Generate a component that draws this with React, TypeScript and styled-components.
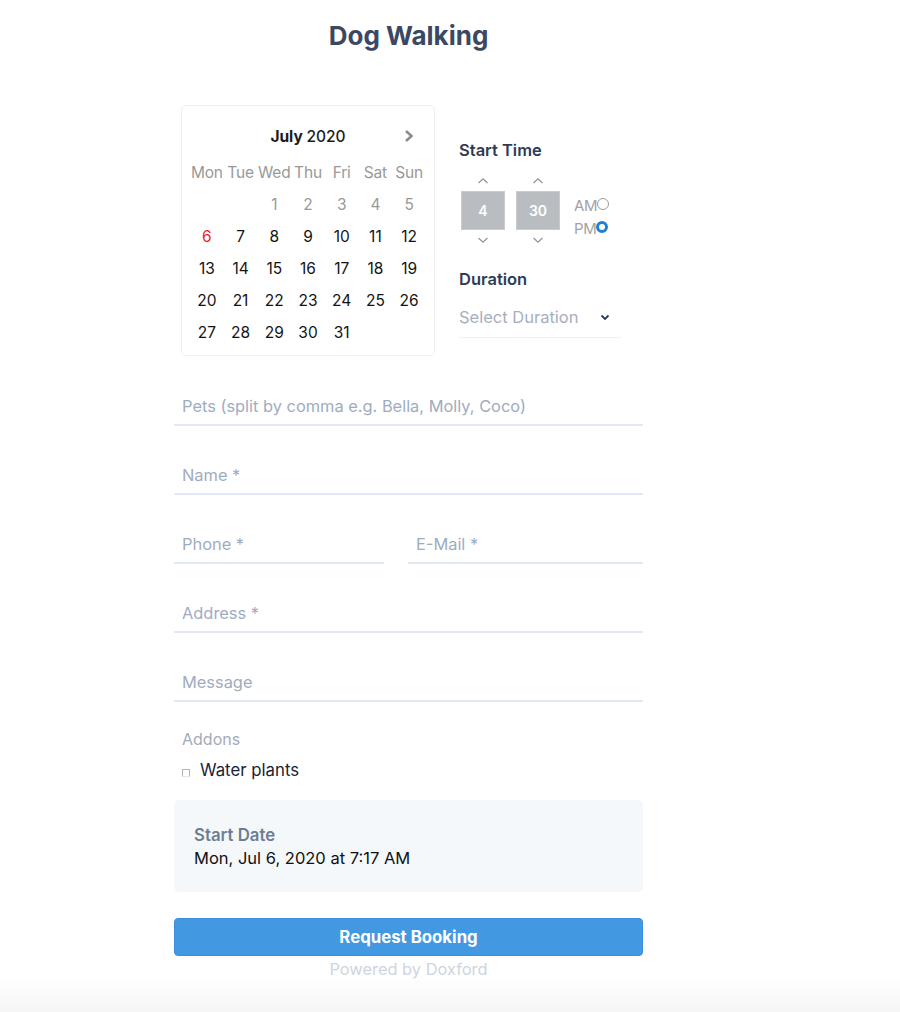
import styled, { createGlobalStyle } from "styled-components";

const GlobalStyle = createGlobalStyle`
  html, body {
    margin: 0;
    padding: 0;
  }
  body {
    min-height: 100vh;
    font-family: Inter, "Noto Sans", sans-serif;
    background: linear-gradient(to bottom, #ffffff 0, #ffffff 975px, #f6f6f6 1012px);
  }
  * {
    box-sizing: border-box;
  }
`;

const days = Array.from({ length: 31 }, (_, i) => i + 1);
const weekdays = ["Mon", "Tue", "Wed", "Thu", "Fri", "Sat", "Sun"];

const ChevronUp = () => (
  <svg width="12" height="8" viewBox="0 0 12 8" fill="none">
    <path d="M1.5 6 L6 1.8 L10.5 6" stroke="#8a93a3" strokeWidth="1.2" />
  </svg>
);

const ChevronDown = () => (
  <svg width="12" height="8" viewBox="0 0 12 8" fill="none">
    <path d="M1.5 2 L6 6.2 L10.5 2" stroke="#8a93a3" strokeWidth="1.2" />
  </svg>
);

const App = () => {
  return (
    <>
      <GlobalStyle />
      <Page>
        <Title>Dog Walking</Title>

        <Form>
          <TopRow>
            <Calendar>
              <CalendarHeader>
                <MonthLabel>
                  July <span>2020</span>
                </MonthLabel>
                <NextButton>
                  <svg width="12" height="14" viewBox="0 0 12 14" fill="none">
                    <path d="M3 2 L8.5 7 L3 12" stroke="#8c8c8c" strokeWidth="2.6" />
                  </svg>
                </NextButton>
              </CalendarHeader>
              <DayGrid>
                {weekdays.map((d) => (
                  <Weekday key={d}>{d}</Weekday>
                ))}
                <Day />
                <Day />
                {days.map((d) => (
                  <Day key={d} $past={d < 6} $today={d === 6}>
                    {d}
                  </Day>
                ))}
              </DayGrid>
            </Calendar>

            <SidePanel>
              <Label>Start Time</Label>
              <TimePicker>
                <Spinner>
                  <SpinButton>
                    <ChevronUp />
                  </SpinButton>
                  <TimeBox>4</TimeBox>
                  <SpinButton>
                    <ChevronDown />
                  </SpinButton>
                </Spinner>
                <Spinner>
                  <SpinButton>
                    <ChevronUp />
                  </SpinButton>
                  <TimeBox>30</TimeBox>
                  <SpinButton>
                    <ChevronDown />
                  </SpinButton>
                </Spinner>
                <Meridiem>
                  <MeridiemOption>
                    AM
                    <Radio />
                  </MeridiemOption>
                  <MeridiemOption>
                    PM
                    <Radio $checked />
                  </MeridiemOption>
                </Meridiem>
              </TimePicker>

              <Label $spaced>Duration</Label>
              <Select>
                <span>Select Duration</span>
                <svg width="10" height="7" viewBox="0 0 10 7" fill="none">
                  <path d="M1.5 1.5 L5 5 L8.5 1.5" stroke="#2d3a55" strokeWidth="1.8" />
                </svg>
              </Select>
            </SidePanel>
          </TopRow>

          <Field>
            <Input placeholder="Pets (split by comma e.g. Bella, Molly, Coco)" />
          </Field>
          <Field>
            <Input placeholder="Name *" />
          </Field>
          <SplitRow>
            <Field>
              <Input placeholder="Phone *" />
            </Field>
            <Field>
              <Input placeholder="E-Mail *" />
            </Field>
          </SplitRow>
          <Field>
            <Input placeholder="Address *" />
          </Field>
          <Field>
            <Input placeholder="Message" />
          </Field>

          <Addons>
            <AddonsTitle>Addons</AddonsTitle>
            <CheckRow>
              <CheckBox />
              Water plants
            </CheckRow>
          </Addons>

          <Summary>
            <SummaryLabel>Start Date</SummaryLabel>
            <SummaryValue>Mon, Jul 6, 2020 at 7:17 AM</SummaryValue>
          </Summary>

          <SubmitButton type="button">Request Booking</SubmitButton>
          <PoweredBy>Powered by Doxford</PoweredBy>
        </Form>
      </Page>
    </>
  );
};

export default App;

const Page = styled.div`
  width: 100%;
  padding-top: 20px;
`;

const Title = styled.h1`
  margin: 0;
  width: 817px;
  text-align: center;
  font-size: 26px;
  line-height: 32px;
  font-weight: 700;
  color: #3b4863;
`;

const Form = styled.div`
  width: 469px;
  margin-left: 174px;
  margin-top: 53px;
  display: flex;
  flex-direction: column;
`;

const TopRow = styled.div`
  display: flex;
  align-items: flex-start;
  gap: 24px;
  padding-left: 7px;
  margin-bottom: 32px;
`;

const Calendar = styled.div`
  width: 254px;
  height: 251px;
  border: 1px solid #f0f0f0;
  border-radius: 5px;
  padding: 15px 8px 8px;
`;

const CalendarHeader = styled.div`
  display: grid;
  grid-template-columns: repeat(7, 1fr);
  height: 30px;
  margin-bottom: 5px;
  align-items: center;
`;

const MonthLabel = styled.div`
  grid-column: 2 / 7;
  text-align: center;
  font-size: 15.5px;
  font-weight: 700;
  color: #1b1b1b;

  span {
    font-weight: 500;
  }
`;

const NextButton = styled.div`
  grid-column: 7;
  display: flex;
  justify-content: center;
  align-items: center;
`;

const DayGrid = styled.div`
  display: grid;
  grid-template-columns: repeat(7, 1fr);
  grid-auto-rows: 32px;
`;

const Weekday = styled.div`
  display: flex;
  align-items: center;
  justify-content: center;
  font-size: 15.5px;
  color: #999999;
  letter-spacing: -0.2px;
`;

const Day = styled.div<{ $past?: boolean; $today?: boolean }>`
  display: flex;
  align-items: center;
  justify-content: center;
  font-size: 15.5px;
  color: ${({ $past, $today }) => ($today ? "#f01e1e" : $past ? "#999999" : "#141414")};
`;

const SidePanel = styled.div`
  width: 162px;
  padding-top: 34px;
  display: flex;
  flex-direction: column;
`;

const Label = styled.div<{ $spaced?: boolean }>`
  font-size: 16.5px;
  line-height: 22px;
  font-weight: 600;
  color: #2f3b54;
  margin-top: ${({ $spaced }) => ($spaced ? "20px" : "0")};
`;

const TimePicker = styled.div`
  display: flex;
  align-items: center;
  gap: 11px;
  margin-top: 12px;
  padding-left: 2px;
`;

const Spinner = styled.div`
  display: flex;
  flex-direction: column;
  align-items: center;
  gap: 2px;
`;

const SpinButton = styled.div`
  height: 16px;
  display: flex;
  align-items: center;
  justify-content: center;
`;

const TimeBox = styled.div`
  width: 44px;
  height: 39px;
  background: #b9bdc1;
  border: 1px solid #c8ccd0;
  color: #ffffff;
  font-size: 14px;
  font-weight: 600;
  display: flex;
  align-items: center;
  justify-content: center;
`;

const Meridiem = styled.div`
  display: flex;
  flex-direction: column;
  gap: 4px;
  margin-left: 3px;
  margin-top: 13px;
`;

const MeridiemOption = styled.div`
  display: flex;
  align-items: center;
  font-size: 15px;
  line-height: 19px;
  color: #a3a3a3;
  letter-spacing: -0.4px;
`;

const Radio = styled.span<{ $checked?: boolean }>`
  width: 12px;
  height: 12px;
  margin-top: -3px;
  border-radius: 50%;
  border: ${({ $checked }) => ($checked ? "3.5px solid #1f7fd6" : "1px solid #9a9a9a")};
  background: #ffffff;
`;

const Select = styled.div`
  margin-top: 17px;
  height: 31px;
  border-bottom: 1px solid #edf1f6;
  display: flex;
  align-items: flex-start;
  justify-content: space-between;
  padding-right: 11px;
  font-size: 16.5px;
  line-height: 20px;
  color: #a6afbd;

  svg {
    margin-top: 7px;
  }
`;

const Field = styled.div`
  border-bottom: 2px solid #e2e8f4;
  margin-bottom: 31px;
`;

const Input = styled.input`
  display: block;
  width: 100%;
  height: 36px;
  padding: 8px;
  border: none;
  outline: none;
  background: transparent;
  font-family: Inter, "Noto Sans", sans-serif;
  font-size: 16.4px;
  color: #2d3748;

  &::placeholder {
    color: #a0acc0;
  }
`;

const SplitRow = styled.div`
  display: grid;
  grid-template-columns: 210px 1fr;
  gap: 24px;
`;

const Addons = styled.div`
  margin-top: -4px;
  padding-left: 8px;
  margin-bottom: 20px;
`;

const AddonsTitle = styled.div`
  font-size: 16px;
  line-height: 20px;
  color: #a3abb8;
`;

const CheckRow = styled.label`
  display: flex;
  align-items: center;
  gap: 10px;
  margin-top: 11px;
  font-size: 16.8px;
  line-height: 20px;
  color: #1a2236;
`;

const CheckBox = styled.span`
  width: 8px;
  height: 8px;
  margin-top: 6px;
  border: 1px solid #b5b5b5;
  border-bottom-color: #e6e6e6;
  border-radius: 1px;
`;

const Summary = styled.div`
  background: #f5f8fb;
  border-radius: 5px;
  padding: 25px 20px 24px;
  display: flex;
  flex-direction: column;
  gap: 3px;
`;

const SummaryLabel = styled.div`
  font-size: 16.8px;
  line-height: 20px;
  font-weight: 600;
  color: #6f7d94;
`;

const SummaryValue = styled.div`
  font-size: 16.5px;
  line-height: 20px;
  color: #111111;
`;

const SubmitButton = styled.button`
  margin-top: 26px;
  height: 38px;
  width: 100%;
  border: 1px solid #3a8edb;
  border-radius: 4px;
  background: #4299e1;
  color: #ffffff;
  font-family: Inter, "Noto Sans", sans-serif;
  font-size: 16.8px;
  font-weight: 700;
  cursor: pointer;
`;

const PoweredBy = styled.div`
  margin-top: 3px;
  text-align: center;
  font-size: 16.4px;
  line-height: 20px;
  color: #cdd5e0;
`;
